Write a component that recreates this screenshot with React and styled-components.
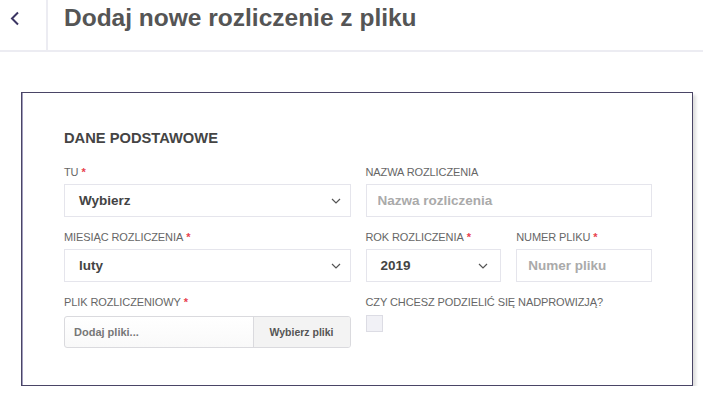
import React from 'react';
import styled, { createGlobalStyle } from 'styled-components';

const GlobalStyle = createGlobalStyle`
    body {
        margin: 0;
        background: #ffffff;
        font-family: "Liberation Sans", Arial, sans-serif;
    }
`;

const Header = styled.header`
    display: flex;
    align-items: flex-start;
    height: 50px;
    border-bottom: 2px solid #ececf2;
`;

const BackButton = styled.button`
    width: 48px;
    height: 50px;
    padding: 11px 0 0 10px;
    display: flex;
    align-items: flex-start;
    border: none;
    border-right: 2px solid #ececf2;
    background: transparent;
    cursor: pointer;
`;

const Title = styled.h1`
    margin: 0 0 0 16px;
    font-size: 24.5px;
    line-height: 36px;
    font-weight: bold;
    color: #555555;
`;

const Card = styled.section`
    margin: 40px 10px 0 21px;
    padding: 37px 40px 37px 42px;
    border: 1px solid #4a4566;
    box-shadow: inset 1px 0 0 #a19dbd, 3px 3px 3px rgba(0, 0, 0, 0.13);
`;

const SectionTitle = styled.h2`
    margin: 0 0 19px;
    font-size: 14.7px;
    line-height: 17px;
    font-weight: bold;
    color: #444444;
`;

const Grid = styled.div`
    display: grid;
    grid-template-columns: repeat(4, minmax(0, 1fr));
    column-gap: 15px;
    row-gap: 14px;
`;

const Field = styled.div`
    display: flex;
    flex-direction: column;
    grid-column: span ${(p) => p.span || 1};
`;

const Label = styled.label`
    margin-bottom: 5px;
    font-size: 11px;
    line-height: 13px;
    color: #666666;
    letter-spacing: -0.1px;
    white-space: nowrap;
`;

const Required = styled.span`
    margin-left: 3px;
    color: #e8424f;
    font-weight: bold;
`;

const SelectBox = styled.div`
    display: flex;
    align-items: center;
    justify-content: space-between;
    height: 33px;
    box-sizing: border-box;
    padding: 0 ${(p) => (p.narrow ? 12 : 9)}px 0 14px;
    border: 1px solid #e5e5ec;
    font-size: 13.5px;
    font-weight: bold;
    color: #444444;
`;

const TextInput = styled.input`
    min-width: 0;
    height: 33px;
    box-sizing: border-box;
    padding: 0 11px;
    border: 1px solid #e5e5ec;
    font-family: inherit;
    font-size: 13.5px;
    font-weight: bold;
    color: #444444;
    outline: none;
    &::placeholder {
        color: #aaaaaa;
    }
`;

const FilePicker = styled.div`
    display: flex;
    height: 32px;
    margin-top: 2px;
    box-sizing: border-box;
    border: 1px solid #dadade;
    border-radius: 3px;
    overflow: hidden;
    background: linear-gradient(#ffffff, #f9f9f9);
`;

const FileText = styled.span`
    flex: 1;
    display: flex;
    align-items: center;
    padding-left: 9px;
    font-size: 11px;
    font-weight: bold;
    color: #777777;
`;

const FileButton = styled.button`
    width: 97px;
    border: none;
    border-left: 1px solid #dadade;
    background: #f3f3f3;
    font-family: inherit;
    font-size: 10.5px;
    font-weight: bold;
    color: #555555;
`;

const Checkbox = styled.span`
    width: 17px;
    height: 17px;
    margin-top: 1px;
    box-sizing: border-box;
    border: 1px solid #dcdce4;
    background: #f1f1f6;
`;

function Chevron() {
    return (
        <svg width="10" height="6" viewBox="0 0 10 6">
            <path d="M1 1l4 4 4-4" fill="none" stroke="#555" strokeWidth="1.2" />
        </svg>
    );
}

export default function App() {
    return (
        <>
            <GlobalStyle />
            <Header>
                <BackButton>
                    <svg width="10" height="15" viewBox="0 0 10 15">
                        <path d="M8 1.5L2 7.5l6 6" fill="none" stroke="#3b3563" strokeWidth="2" />
                    </svg>
                </BackButton>
                <Title>Dodaj nowe rozliczenie z pliku</Title>
            </Header>

            <Card>
                <SectionTitle>DANE PODSTAWOWE</SectionTitle>
                <Grid>
                    <Field span={2}>
                        <Label>TU<Required>*</Required></Label>
                        <SelectBox>Wybierz<Chevron /></SelectBox>
                    </Field>
                    <Field span={2}>
                        <Label>NAZWA ROZLICZENIA</Label>
                        <TextInput placeholder="Nazwa rozliczenia" />
                    </Field>

                    <Field span={2}>
                        <Label>MIESIĄC ROZLICZENIA<Required>*</Required></Label>
                        <SelectBox>luty<Chevron /></SelectBox>
                    </Field>
                    <Field>
                        <Label>ROK ROZLICZENIA<Required>*</Required></Label>
                        <SelectBox narrow>2019<Chevron /></SelectBox>
                    </Field>
                    <Field>
                        <Label>NUMER PLIKU<Required>*</Required></Label>
                        <TextInput placeholder="Numer pliku" />
                    </Field>

                    <Field span={2}>
                        <Label>PLIK ROZLICZENIOWY<Required>*</Required></Label>
                        <FilePicker>
                            <FileText>Dodaj pliki...</FileText>
                            <FileButton>Wybierz pliki</FileButton>
                        </FilePicker>
                    </Field>
                    <Field span={2}>
                        <Label>CZY CHCESZ PODZIELIĆ SIĘ NADPROWIZJĄ?</Label>
                        <Checkbox />
                    </Field>
                </Grid>
            </Card>
        </>
    );
}
